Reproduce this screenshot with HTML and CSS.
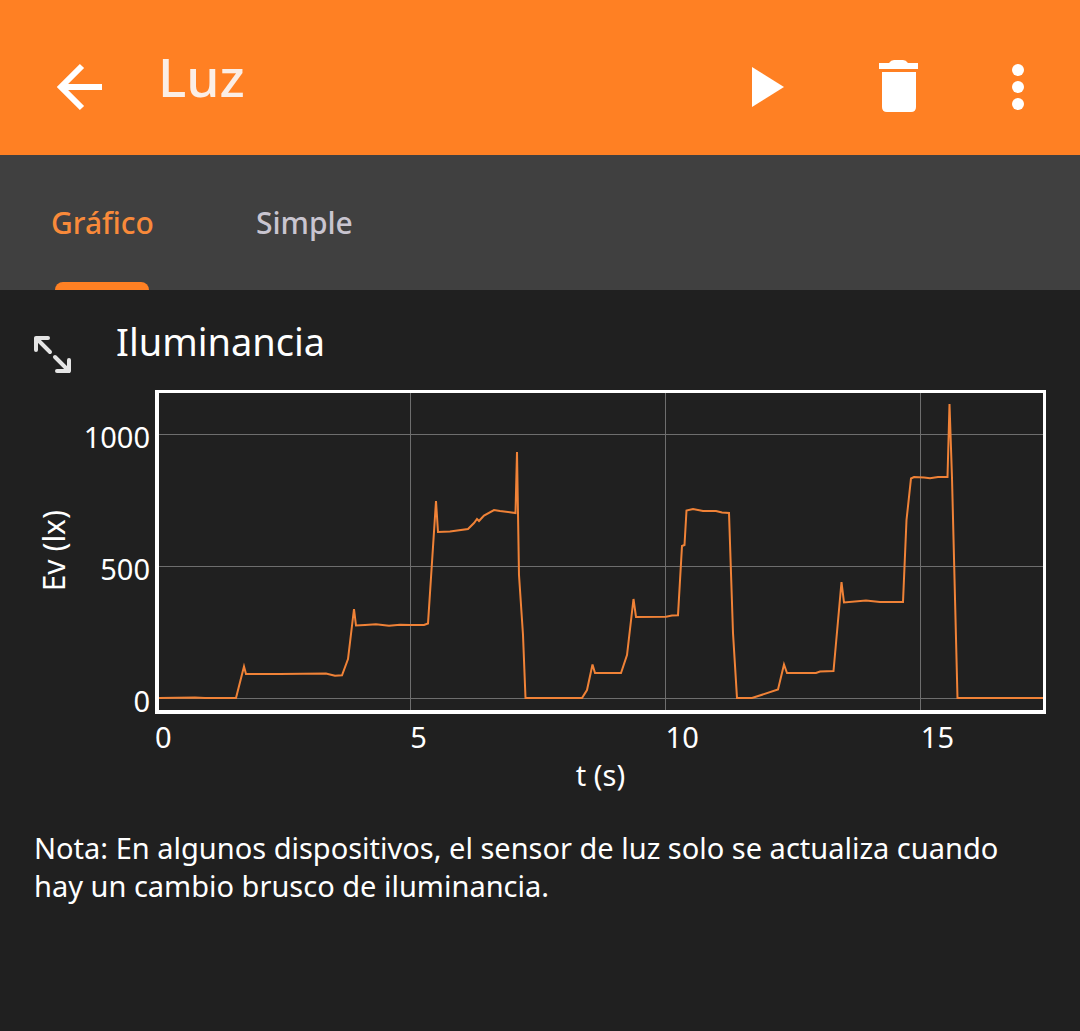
FILE: index.html
```html
<!DOCTYPE html>
<html lang="es">
<head>
<meta charset="utf-8">
<meta name="viewport" content="width=device-width, initial-scale=1">
<title>Luz</title>
<link rel="stylesheet" href="styles.css">
</head>
<body>
<header class="app-bar">
  <button class="icon-button" type="button" aria-label="Atrás">
    <svg width="48" height="48" viewBox="0 0 48 48" fill="none" stroke="currentColor" stroke-width="6"><path d="M26 3 5 24l21 21M4 24h42"/></svg>
  </button>
  <h1 class="title">Luz</h1>
  <div class="actions">
    <button class="icon-button" type="button" aria-label="Iniciar">
      <svg width="32" height="40" viewBox="0 0 32 40" fill="currentColor"><path d="M0 0v40l32-20z"/></svg>
    </button>
    <button class="icon-button" type="button" aria-label="Borrar">
      <svg width="40" height="52" viewBox="0 0 40 52" fill="currentColor"><path d="M1 2h10q2-3 5-3h9q3 0 5 3h10v6H1zM4 11h34v35q0 5-5 5H9q-5 0-5-5z"/></svg>
    </button>
    <button class="icon-button" type="button" aria-label="Más opciones">
      <svg width="12" height="48" viewBox="0 0 12 48" fill="currentColor"><circle cx="6" cy="7" r="6"/><circle cx="6" cy="24" r="6"/><circle cx="6" cy="41" r="6"/></svg>
    </button>
  </div>
</header>
<nav class="tabs">
  <a class="tab tab-active" href="#grafico" aria-current="page">Gráfico</a>
  <a class="tab" href="#simple">Simple</a>
</nav>
<main class="content" id="grafico">
  <section class="graph">
    <div class="graph-head">
      <button class="expand" type="button" aria-label="Ampliar">
        <svg width="38" height="38" viewBox="0 0 38 38" fill="none" stroke="currentColor" stroke-width="4" stroke-linecap="round" stroke-linejoin="round"><path d="M2 15V3h12M2 3l14 14M21 22l14 14M35 25v11H23"/></svg>
      </button>
      <h2 class="graph-title">Iluminancia</h2>
    </div>
    <div class="chart">
      <div class="y-title">Ev (lx)</div>
      <div class="y-ticks"><span>1000</span><span>500</span><span>0</span></div>
      <svg class="plot" viewBox="159 393 884 317" preserveAspectRatio="none" role="img" aria-label="Iluminancia en función del tiempo">
        <path class="grid-line" d="M159 434.5h884M159 566.5h884M159 698.5h884M410.500 393v317M665.500 393v317M920.500 393v317"/>
        <polyline class="series" points="159,698 195,697.500 205,698 236,698 244,666.500 246,674 280,674 326,673.500 335,675.700 342,675.300 348,659 354,609 356,625.500 365,625 376,624.300 389,625.700 400,624.700 410,625 424,625 428,623.500 436,501 438,532 450,531.500 468,529 474,523 477,519 479,521 484,515.500 494,510 500,511 515.500,513 517,452 519,575 523,635 525.500,698 582,698 587,690 592.500,664.500 595,673 621,673 627,655 633.500,599 636,617 666,616.700 672,615.500 678,615.300 682,546 684.500,545 686.500,510.500 693,509 703,511 716,511 722,512.500 729,513 733,633 737,698 752,698 778,689.500 784,664.500 787,673 816,673 820,671.500 833.500,671 841.500,582 844,602.500 866,600.500 880,602 903,602 906.500,520 911,478.500 914,477 924,477.500 930,478.300 938,477 947.500,477 949.500,404 952,478 957.500,698 1043,698"/>
      </svg>
      <div class="x-ticks"><span>0</span><span>5</span><span>10</span><span>15</span></div>
      <div class="x-title">t (s)</div>
    </div>
  </section>
  <p class="note">Nota: En algunos dispositivos, el sensor de luz solo se actualiza cuando hay un cambio brusco de iluminancia.</p>
</main>
</body>
</html>
```
FILE: styles.css
```css
* { box-sizing: border-box; }

body {
  margin: 0;
  min-height: 100vh;
  background: #202020;
  color: #fff;
  font-family: "Noto Sans", "Open Sans", sans-serif;
  font-size: 29px;
  line-height: 38px;
}

h1, h2, p { margin: 0; }

button {
  padding: 0;
  border: 0;
  background: none;
  color: inherit;
  cursor: pointer;
}

svg {
  display: block;
  overflow: visible;
}

.app-bar {
  display: flex;
  height: 155px;
  padding: 18px 56px 0;
  background: #ff8023;
}

.icon-button {
  display: flex;
  align-items: center;
}

.title {
  align-self: center;
  margin-left: 54px;
  padding-bottom: 20px;
  color: #fbeee6;
  font-size: 53px;
  font-weight: 500;
  line-height: 64px;
}

.actions {
  display: flex;
  gap: 94px;
  margin-left: auto;
}

.tabs {
  display: flex;
  gap: 102px;
  height: 135px;
  padding: 0 51px;
  background: #404040;
}

.tab {
  display: flex;
  flex-direction: column;
  justify-content: space-between;
  padding-top: 49px;
  color: #c9c5d0;
  font-size: 30px;
  font-weight: 500;
  text-decoration: none;
}

.tab-active { color: #f98a3a; }

.tab-active::after {
  content: "";
  height: 8px;
  margin: 0 5px 0 4px;
  border-radius: 8px 8px 0 0;
  background: #ff8023;
}

.content { padding: 27px 34px; }

.graph-head {
  display: flex;
  align-items: flex-start;
  gap: 44px;
  height: 73px;
}

.expand {
  padding-top: 18px;
  color: #e4e4e4;
}

.graph-title {
  font-size: 38px;
  font-weight: 400;
  line-height: 48px;
}

.chart {
  display: grid;
  grid-template-columns: 40px 81px 1fr;
}

.y-title {
  justify-self: center;
  align-self: center;
  padding-top: 8px;
  font-size: 30px;
  writing-mode: vertical-rl;
  transform: rotate(180deg);
}

.y-ticks {
  display: flex;
  flex-direction: column;
  gap: 94px;
  padding: 28px 5px 0 0;
  text-align: right;
}

.plot {
  width: 100%;
  height: 324px;
  border: solid #fff;
  border-width: 3px 3px 4px 4px;
}

.grid-line,
.series {
  fill: none;
  vector-effect: non-scaling-stroke;
}

.grid-line { stroke: #6e6e6e; }

.series {
  stroke: #f08237;
  stroke-width: 2px;
}

.x-ticks,
.x-title { grid-column: 3; }

.x-ticks {
  display: grid;
  grid-template-columns: 255fr 255fr 255fr 125fr;
  margin-top: -2px;
}

.x-title { text-align: center; }

.note { padding: 35px 0; }
```
